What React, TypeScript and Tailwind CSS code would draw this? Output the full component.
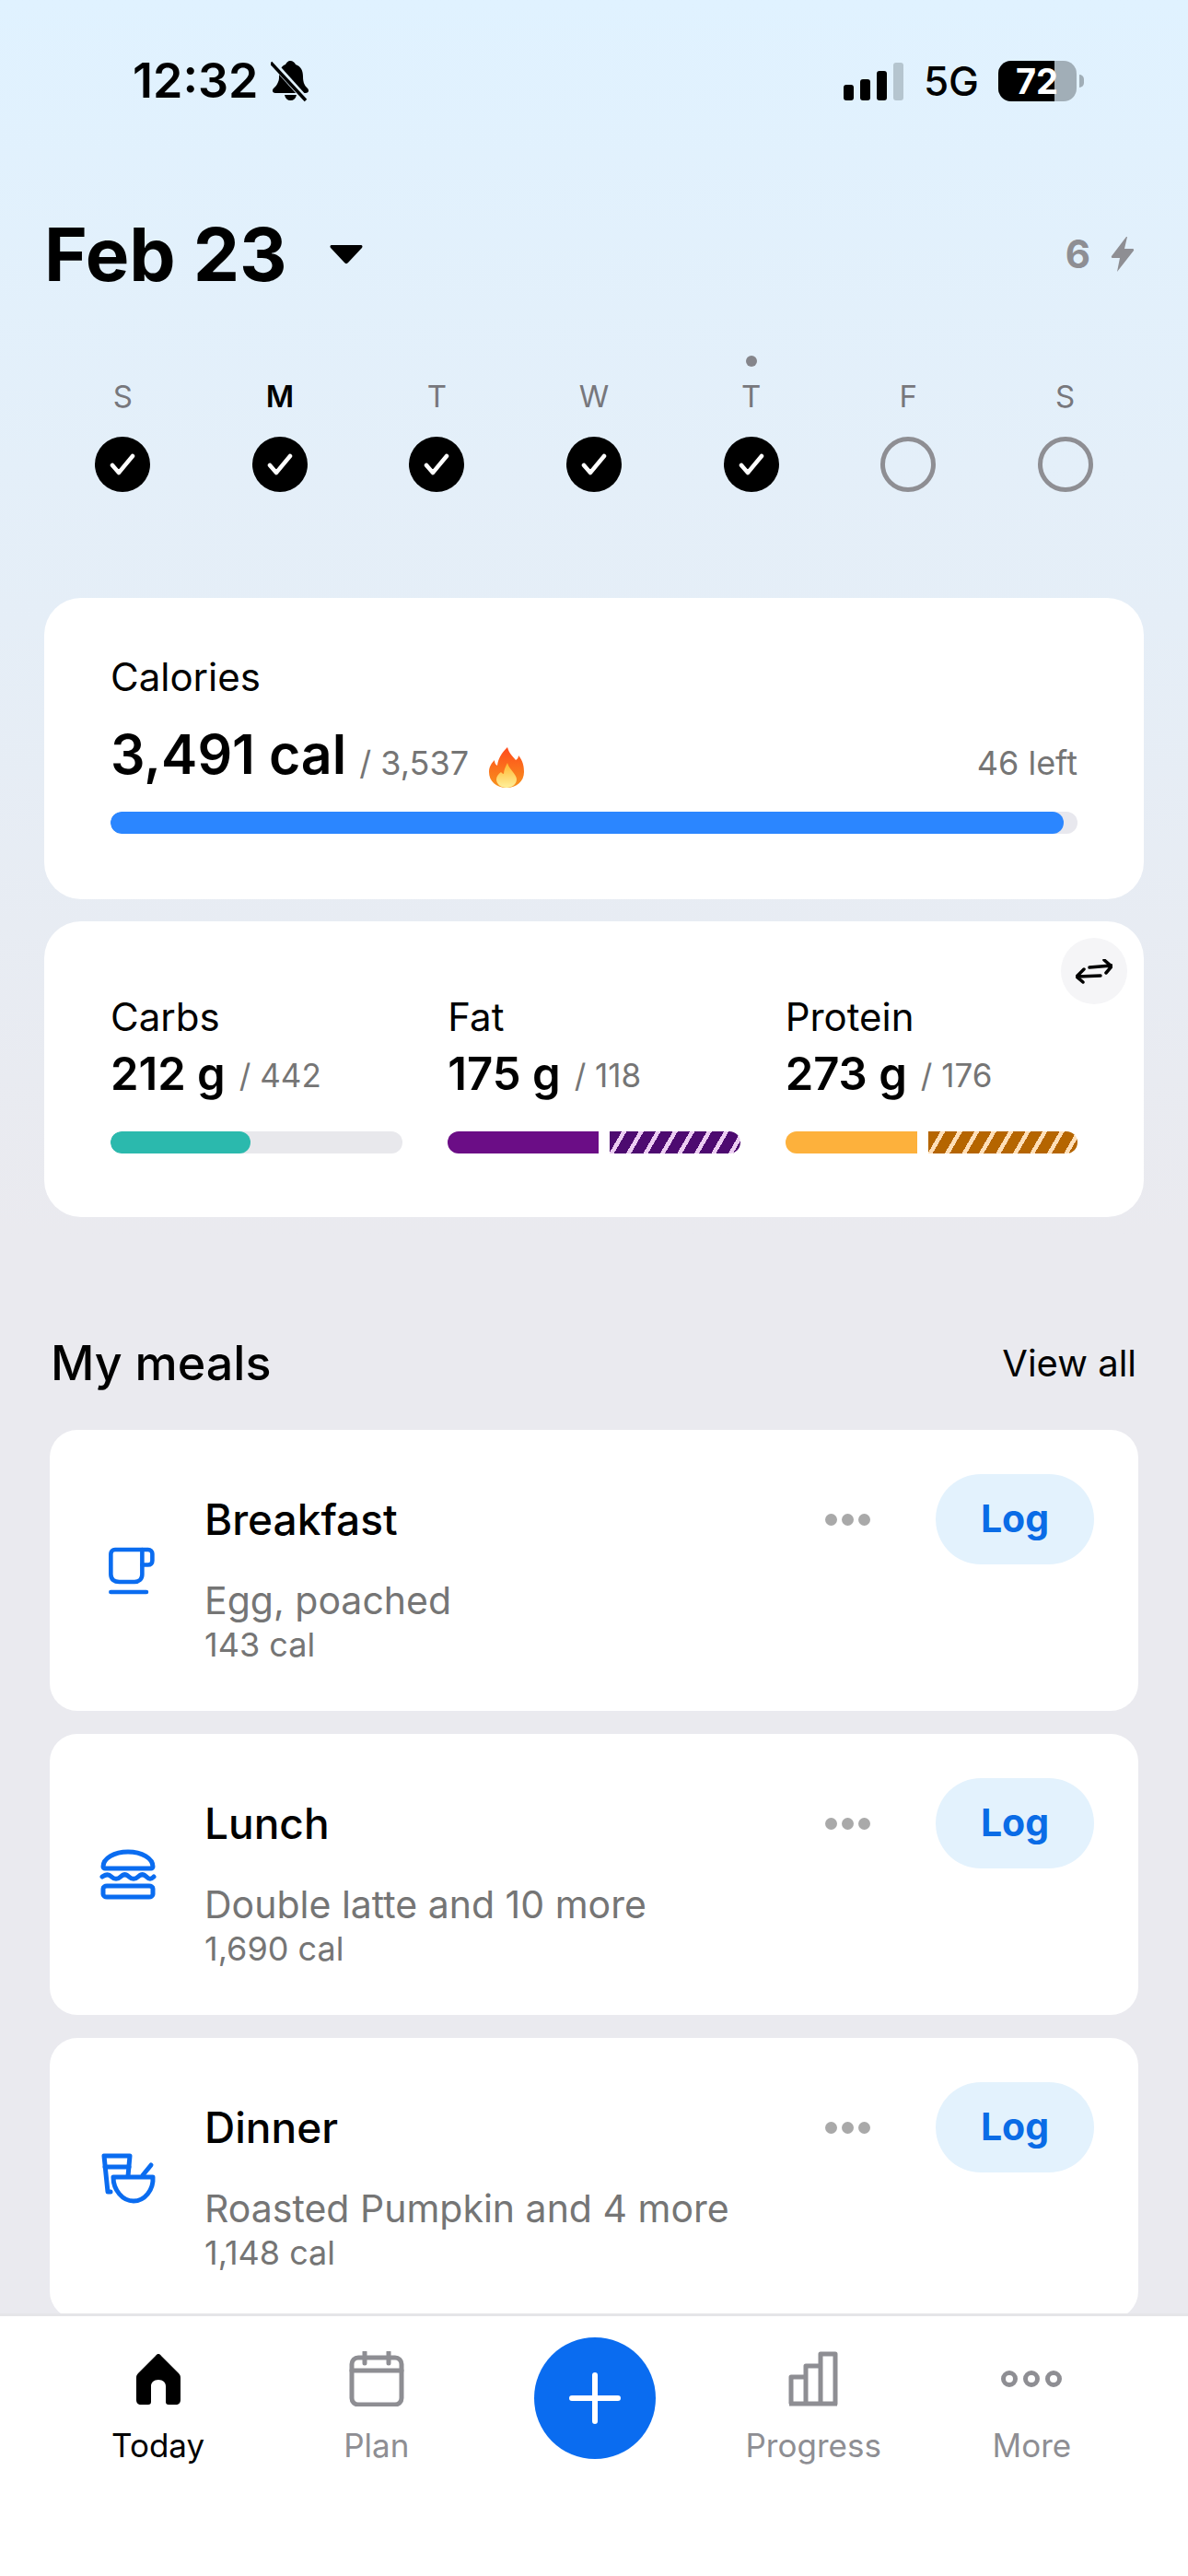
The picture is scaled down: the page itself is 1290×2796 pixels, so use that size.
const days = [
  { label: "S", done: true },
  { label: "M", done: true, bold: true },
  { label: "T", done: true },
  { label: "W", done: true },
  { label: "T", done: true, today: true },
  { label: "F", done: false },
  { label: "S", done: false },
];

function BellOff() {
  return (
    <svg width="42" height="46" viewBox="0 0 42 46" className="ml-[14px]">
      <path d="M21 1c3 0 5 2 6 4 6 2 8 7 8 13 0 7 2 10 5 13 2 2 1 5-2 5H5c-3 0-4-3-2-5 2-2 4-4 5-7 1-2 1-4 1-6 0-7 2-11 7-13 1-2 3-4 5-4z" fill="#000" />
      <path d="M15 38h13c-1 4-3 6-6.500 6S16 42 15 38z" fill="#000" />
      <path d="M2 3l37 41" stroke="#e0f2ff" strokeWidth="7" />
      <path d="M1 3l38 41" stroke="#000" strokeWidth="3.500" transform="translate(-1 0)" />
    </svg>
  );
}

function Signal() {
  return (
    <div className="flex items-end gap-[7px] h-[41px]">
      <div className="w-[11px] h-[17px] rounded-[3px] bg-black" />
      <div className="w-[11px] h-[23px] rounded-[3px] bg-black" />
      <div className="w-[11px] h-[32px] rounded-[3px] bg-black" />
      <div className="w-[11px] h-[41px] rounded-[3px] bg-[#b5c5cf]" />
    </div>
  );
}

function Battery() {
  return (
    <div className="flex items-center gap-[3px]">
      <div className="relative w-[85px] h-[44px] rounded-[14px] overflow-hidden bg-[#a1aeb7] flex">
        <div className="w-[61px] h-full bg-black" />
        <span className="absolute inset-0 flex items-center justify-center pr-[1px] text-white text-[38px] font-bold leading-none">72</span>
      </div>
      <div className="w-[5px] h-[14px] rounded-r-full bg-[#a1aeb7]" />
    </div>
  );
}

function Flame() {
  return (
    <svg width="40" height="46" viewBox="0 0 40 46">
      <defs>
        <linearGradient id="flameOuter" x1="0" y1="0" x2="0" y2="1">
          <stop offset="0" stopColor="#ff4a1c" />
          <stop offset="1" stopColor="#f7941d" />
        </linearGradient>
        <linearGradient id="flameInner" x1="0" y1="0" x2="0" y2="1">
          <stop offset="0" stopColor="#ffb52e" />
          <stop offset="1" stopColor="#fff09a" />
        </linearGradient>
      </defs>
      <path d="M21 1c2 7 5 9 9 14 2-1 3-3 3-5 5 6 6 12 6 18 0 10-8 17-19 17S1 38 1 28c0-6 3-10 6-13 0 3 1 5 3 6 1-8 5-14 11-20z" fill="url(#flameOuter)" />
      <path d="M21 18c1 4 3 6 6 10 2 3 4 5 4 8 0 5-5 9-11 9S9 41 9 36c0-3 2-6 5-8 1 1 2 2 3 2 0-4 2-8 4-12z" fill="url(#flameInner)" />
    </svg>
  );
}

function Swap() {
  return (
    <svg width="40" height="27" viewBox="0 0 40 27" fill="none" stroke="#000" strokeWidth="3.500" strokeLinecap="round" strokeLinejoin="round">
      <path d="M15 9l24-2M31 1l8 7-6 7" />
      <path d="M27 18L2 19M9 11l-8 8 7 6" />
    </svg>
  );
}

function Mug() {
  return (
    <svg width="62" height="56" viewBox="0 0 62 56" fill="none" stroke="#0a6cf0" strokeWidth="5" strokeLinecap="round" strokeLinejoin="round" className="ml-[5px]">
      <path d="M13 3h39c3 0 5 2 5 5v8c0 3-2 5-5 5h-7v11c0 6-4 9-9 9H18c-6 0-10-3-10-9V8c0-3 2-5 5-5z" />
      <path d="M45 3v18" />
      <path d="M8 53h42" />
    </svg>
  );
}

function Burger() {
  return (
    <svg width="62" height="56" viewBox="0 0 62 56" fill="none" stroke="#0a6cf0" strokeWidth="5" strokeLinecap="round" strokeLinejoin="round">
      <path d="M4 19C4 10 16 3 31 3s27 7 27 16c0 1-1 2-2 2H6c-1 0-2-1-2-2z" />
      <path d="M3 30c4-3 7-3 10 0s7 3 10 0 6-3 9 0 7 3 10 0 6-3 9 0 5 3 8 0" />
      <path d="M8 40h46c2 0 4 1 4 3v6c0 2-2 3-4 3H8c-2 0-4-1-4-3v-6c0-2 2-3 4-3z" />
    </svg>
  );
}

function Bowl() {
  return (
    <svg width="62" height="56" viewBox="0 0 62 56" fill="none" stroke="#0a6cf0" strokeWidth="5" strokeLinecap="round" strokeLinejoin="round">
      <path d="M12 42H9L5 3h28l-2 22" />
      <path d="M6 15h26" />
      <path d="M15 26h43c1 14-9 26-21 26S15 40 15 26z" />
      <path d="M47 24l9-11" />
    </svg>
  );
}

function Dots() {
  return (
    <div className="flex gap-[5px]">
      <div className="w-[13px] h-[13px] rounded-full bg-[#a9a9a9]" />
      <div className="w-[13px] h-[13px] rounded-full bg-[#a9a9a9]" />
      <div className="w-[13px] h-[13px] rounded-full bg-[#a9a9a9]" />
    </div>
  );
}

function Meal({ icon, name, item, cal }: { icon: React.ReactNode; name: string; item: string; cal: string }) {
  return (
    <div className="h-[305px] shrink-0 rounded-[30px] bg-white flex items-center pl-[54px] pr-[48px]">
      <div className="w-[62px] shrink-0 flex justify-center">{icon}</div>
      <div className="ml-[52px] flex-1 self-start pt-[48px]">
        <div className="flex items-center h-[98px]">
          <div className="flex-1 text-[46px] leading-none font-medium text-black">{name}</div>
          <Dots />
          <button className="ml-[71px] w-[172px] h-[98px] rounded-full bg-[#e3f2fd] text-[#0a6ce6] text-[41px] font-bold">Log</button>
        </div>
        <div className="mt-[15px] text-[41px] leading-[48px] text-[#757575]">{item}</div>
        <div className="mt-[3px] text-[36px] leading-[42px] text-[#757575]">{cal}</div>
      </div>
    </div>
  );
}

function Macro({ name, value, goal, children }: { name: string; value: string; goal: string; children: React.ReactNode }) {
  return (
    <div>
      <div className="text-[42px] leading-[48px] text-black">{name}</div>
      <div className="mt-[6px] flex items-baseline h-[64px]">
        <span className="text-[49px] leading-[64px] font-semibold text-black">{value}</span>
        <span className="ml-[15px] text-[35px] text-[#757575] -translate-y-[3px]">/ {goal}</span>
      </div>
      <div className="mt-[30px] h-[24px] flex">{children}</div>
    </div>
  );
}

export default function App() {
  return (
    <div className="w-[1290px] h-[2796px] flex flex-col overflow-hidden bg-[#eaeaef] font-['Inter',sans-serif] text-black">
      <div className="flex-1 min-h-0 overflow-hidden">
        <div className="h-[1340px] bg-gradient-to-b from-[#e0f2ff] to-[#eaeaef]">
          {/* status bar */}
          <div className="h-[176px] pt-[60px] pl-[144px] pr-[113px] flex items-start justify-between">
            <div className="flex items-center h-[56px]">
              <span className="text-[52px] leading-none font-semibold">12:32</span>
              <BellOff />
            </div>
            <div className="flex items-center h-[56px]">
              <Signal />
              <span className="ml-[22px] text-[44px] font-medium leading-none">5G</span>
              <div className="ml-[21px]"><Battery /></div>
            </div>
          </div>

          {/* date */}
          <div className="mt-[60px] h-[80px] px-[48px] flex items-center">
            <span className="text-[80px] leading-none font-bold">Feb 23</span>
            <svg width="36" height="22" viewBox="0 0 36 22" className="ml-[46px]">
              <path d="M2 1h32c1.500 0 2 1.500 1 3L20 20c-1 1.500-3 1.500-4 0L1 4C0 2.500.500 1 2 1z" fill="#000" />
            </svg>
            <div className="ml-auto mr-[10px] flex items-center text-[#8e8e93]">
              <span className="text-[42px] font-bold leading-none">6</span>
              <svg width="26" height="38" viewBox="0 0 26 38" className="ml-[22px]">
                <path d="M17 0L1 21c-.500 1 0 2 1 2h8L7 38l18-23c.500-1 0-2-1-2h-9l3-13z" fill="#8e8e93" />
              </svg>
            </div>
          </div>

          {/* week */}
          <div className="mt-[70px] px-[48px] grid grid-cols-7">
            {days.map((d, i) => (
              <div key={i} className="flex flex-col items-center">
                <div className="h-[12px] flex items-center">
                  {d.today && <div className="w-[12px] h-[12px] rounded-full bg-[#85858b]" />}
                </div>
                <div className={d.bold ? "mt-[15px] h-[34px] text-[33px] leading-[34px] font-semibold text-black" : "mt-[15px] h-[34px] text-[33px] leading-[34px] text-[#77777c]"}>{d.label}</div>
                {d.done ? (
                  <div className="mt-[27px] w-[60px] h-[60px] rounded-full bg-black flex items-center justify-center">
                    <svg width="30" height="26" viewBox="0 0 30 26" fill="none" stroke="#fff" strokeWidth="4.500" strokeLinecap="round" strokeLinejoin="round">
                      <path d="M4 14l7 8L26 4" />
                    </svg>
                  </div>
                ) : (
                  <div className="mt-[27px] w-[60px] h-[60px] rounded-full border-[5px] border-[#8e8e93]" />
                )}
              </div>
            ))}
          </div>

          {/* calories */}
          <div className="mt-[115px] mx-[48px] h-[327px] rounded-[40px] bg-white px-[72px] pt-[62px]">
            <div className="text-[42px] leading-[48px]">Calories</div>
            <div className="mt-[23px] flex items-center h-[74px]">
              <span className="text-[59px] leading-[74px] font-semibold">3,491 cal</span>
              <span className="ml-[14px] text-[36px] text-[#757575] self-center mt-[18px]">/ 3,537</span>
              <div className="ml-[21px] mt-[28px]"><Flame /></div>
              <span className="ml-auto text-[36px] text-[#757575] mt-[18px]">46 left</span>
            </div>
            <div className="mt-[25px] h-[24px] rounded-full bg-[#e8e8ee] overflow-hidden">
              <div className="w-[1035px] h-full rounded-full bg-[#2b86ff]" />
            </div>
          </div>

          {/* macros */}
          <div className="relative mt-[24px] mx-[48px] h-[321px] rounded-[40px] bg-white px-[72px] pt-[80px]">
            <div className="absolute top-[18px] right-[18px] w-[72px] h-[72px] rounded-full bg-[#f5f5f7] flex items-center justify-center">
              <Swap />
            </div>
            <div className="grid grid-cols-3 gap-x-[49px]">
              <Macro name="Carbs" value="212 g" goal="442">
                <div className="flex-1 rounded-full bg-[#e8e8ec] overflow-hidden">
                  <div className="w-[152px] h-full rounded-full bg-[#2bb9ad]" />
                </div>
              </Macro>
              <Macro name="Fat" value="175 g" goal="118">
                <div className="w-[164px] rounded-l-full bg-[#6b0d86]" />
                <div className="ml-[12px] flex-1 rounded-r-full bg-[repeating-linear-gradient(120deg,#4d0a70_0,#4d0a70_11.500px,#eccdf2_11.500px,#eccdf2_16px)]" />
              </Macro>
              <Macro name="Protein" value="273 g" goal="176">
                <div className="w-[143px] rounded-l-full bg-[#fdb13c]" />
                <div className="ml-[12px] flex-1 rounded-r-full bg-[repeating-linear-gradient(120deg,#b56500_0,#b56500_11.500px,#ffdfb8_11.500px,#ffdfb8_16px)]" />
              </Macro>
            </div>
          </div>
        </div>

        {/* meals */}
        <div className="mt-[110px] pl-[55px] pr-[56px] flex items-center justify-between h-[60px]">
          <span className="text-[52px] leading-none font-medium">My meals</span>
          <span className="text-[40px] leading-none">View all</span>
        </div>
        <div className="mt-[42px] mx-[54px] flex flex-col gap-[25px]">
          <Meal icon={<Mug />} name="Breakfast" item="Egg, poached" cal="143 cal" />
          <Meal icon={<Burger />} name="Lunch" item="Double latte and 10 more" cal="1,690 cal" />
          <Meal icon={<Bowl />} name="Dinner" item="Roasted Pumpkin and 4 more" cal="1,148 cal" />
        </div>
      </div>

      {/* tab bar */}
      <div className="h-[285px] shrink-0 border-t-[3px] border-[#e5e5e8] bg-white pl-[53px] pr-[51px] grid grid-cols-5 items-start">
        <div className="flex flex-col items-center pt-[38px]">
          <svg width="50" height="60" viewBox="0 0 50 60">
            <path d="M25 3c1 0 2 .500 3 2l19 19c1.500 1.500 2 3 2 5v24c0 3-2 5-5 5h-8c-2 0-3-1-3-3V38c0-4-3-7-8-7s-8 3-8 7v17c0 2-1 3-3 3H6c-3 0-5-2-5-5V29c0-2 .500-3.500 2-5L22 5c1-1.500 2-2 3-2z" fill="#000" />
          </svg>
          <span className="mt-[20px] text-[35px] leading-[44px] text-black">Today</span>
        </div>
        <div className="flex flex-col items-center pt-[38px]">
          <svg width="60" height="60" viewBox="0 0 60 60" fill="none" stroke="#8e8e93" strokeWidth="5" strokeLinecap="round" strokeLinejoin="round">
            <rect x="3" y="7" width="54" height="51" rx="7" />
            <path d="M3 21h54M17 1v12M43 1v12" />
          </svg>
          <span className="mt-[20px] text-[35px] leading-[44px] text-[#8e8e93]">Plan</span>
        </div>
        <div className="flex justify-center pt-[23px]">
          <button className="w-[132px] h-[132px] rounded-full bg-[#0a6cf0] flex items-center justify-center">
            <svg width="56" height="56" viewBox="0 0 56 56" stroke="#fff" strokeWidth="6" strokeLinecap="round">
              <path d="M28 3v50M3 28h50" />
            </svg>
          </button>
        </div>
        <div className="flex flex-col items-center pt-[38px]">
          <svg width="54" height="60" viewBox="0 0 54 60" fill="none" stroke="#8e8e93" strokeWidth="5" strokeLinejoin="round">
            <path d="M3 57V28h16v29M19 57V16h16v41M35 57V3h16v54zM1 57h52" />
          </svg>
          <span className="mt-[20px] text-[35px] leading-[44px] text-[#8e8e93]">Progress</span>
        </div>
        <div className="flex flex-col items-center pt-[38px]">
          <div className="h-[60px] flex items-center gap-[6px]">
            <div className="w-[18px] h-[18px] rounded-full border-[5px] border-[#8e8e93]" />
            <div className="w-[18px] h-[18px] rounded-full border-[5px] border-[#8e8e93]" />
            <div className="w-[18px] h-[18px] rounded-full border-[5px] border-[#8e8e93]" />
          </div>
          <span className="mt-[20px] text-[35px] leading-[44px] text-[#8e8e93]">More</span>
        </div>
      </div>
    </div>
  );
}
